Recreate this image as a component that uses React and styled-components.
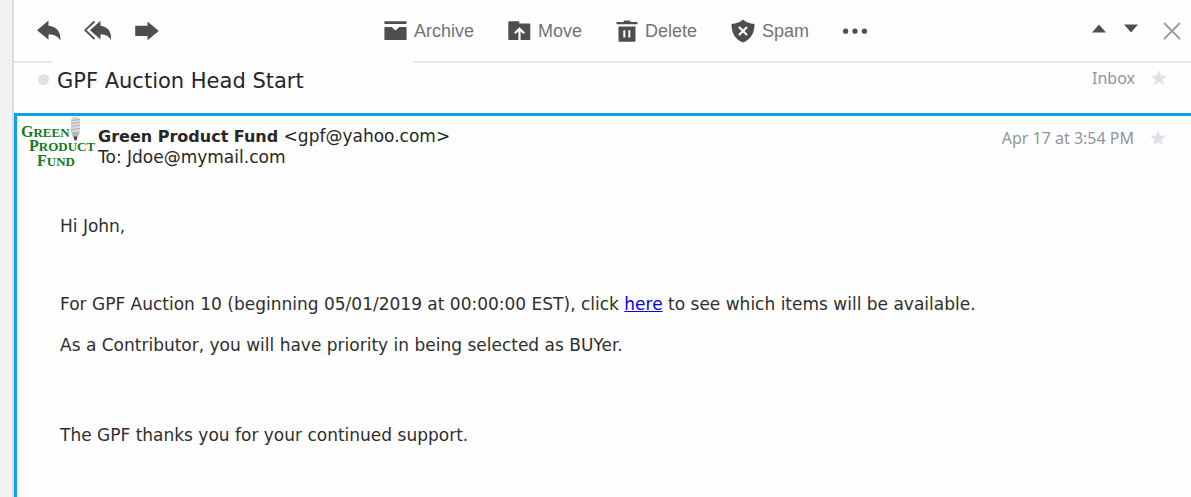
import React from 'react';
import styled, { createGlobalStyle } from 'styled-components';

const GlobalStyle = createGlobalStyle`
  * { box-sizing: border-box; }
  body {
    margin: 0;
    background: #fefefe;
    color: #262626;
    font-family: Verdana, "DejaVu Sans", sans-serif;
    font-size: 17px;
  }
`;

const Page = styled.div`
  display: flex;
  min-height: 100vh;
`;

const Rail = styled.div`
  flex: 0 0 14px;
  background: #f2f2f5;
  border-right: 2px solid #dcdce3;
`;

const Mail = styled.main`
  flex: 1;
  min-width: 0;
  display: flex;
  flex-direction: column;
`;

const Toolbar = styled.header`
  display: flex;
  align-items: center;
  height: 61px;
`;

const ReplyTools = styled.div`
  display: flex;
  align-items: center;
  gap: 23px;
  flex: 0 1 370px;
  padding-left: 23px;
`;

const ActionTools = styled.div`
  display: flex;
  align-items: center;
  gap: 34px;
`;

const ViewTools = styled.div`
  display: flex;
  align-items: center;
  gap: 24px;
  margin-left: auto;
  padding-right: 10px;
`;

const Pager = styled.div`
  display: flex;
  gap: 16px;
`;

const ToolButton = styled.button`
  display: flex;
  align-items: center;
  gap: 7px;
  padding: 0;
  border: 0;
  background: none;
  color: #727276;
  font-family: "Liberation Sans", Arial, sans-serif;
  font-size: 18px;
  line-height: 24px;
  cursor: pointer;

  svg {
    display: block;
    flex: none;
    color: ${(p) => p.$tone || '#4d4e50'};
  }
`;

const RuleRow = styled.div`
  display: flex;
`;

const Rule = styled.div`
  height: 2px;
  background: #e4e8ee;
  flex: ${(p) => (p.$short ? '0 0 38px' : '1')};
  margin-left: ${(p) => (p.$short ? '0' : '361px')};
`;

const SubjectRow = styled.section`
  display: flex;
  align-items: flex-start;
  height: 50px;
  padding: 3px 24px 0 24px;
`;

const UnreadDot = styled.span`
  width: 11px;
  height: 11px;
  margin: 8px 8px 0 0;
  border-radius: 50%;
  background: #dfe2e9;
`;

const Subject = styled.h1`
  margin: 0;
  font-size: 21px;
  line-height: 30px;
  font-weight: 400;
`;

const Meta = styled.div`
  display: flex;
  align-items: center;
  gap: 16px;
  margin-left: auto;
  color: #91959e;
  font-family: "Noto Sans", sans-serif;
  font-size: 16px;
  line-height: 24px;
  white-space: nowrap;
`;

const StarButton = styled.button`
  padding: 0;
  border: 0;
  background: none;
  color: #dfe2ea;
  cursor: pointer;

  svg { display: block; }
`;

const Message = styled.article`
  flex: 1;
  border-top: 3px solid #0aa1ee;
  border-left: 3px solid #0aa1ee;
`;

const MessageHeader = styled.header`
  display: flex;
  align-items: flex-start;
  padding: 0 25px 0 4px;

  ${Meta} { padding-top: 10px; }
`;

const Addresses = styled.div`
  padding: 10px 0 0 1px;
  line-height: 20px;

  strong { font-size: 16px; }
`;

const Body = styled.div`
  padding: 44px 43px 40px;
  color: #2e2e2e;
  line-height: 24px;
`;

const Paragraph = styled.p`
  margin: 0 0 ${(p) => p.$after || '0'};

  a { color: #0000ee; }
`;

const ReplyIcon = () => (
  <svg width="24" height="22" viewBox="0 0 24 22" fill="currentColor">
    <path d="M0 10.200 11.500.6v5.200C19.800 6.500 24 12 23.400 20.800c-2.500-4.500-5.800-6.200-11.900-6.200v5.200z" />
  </svg>
);

const ReplyAllIcon = () => (
  <svg width="28" height="22" viewBox="0 0 28 22">
    <path d="m10.500 1.500-9.300 8.700 9.300 8.800" fill="none" stroke="currentColor" strokeWidth="1.800" />
    <path d="M6 10.200 16.500.8v5C23.700 6.500 28 12 27 20c-2.300-3.900-5-5.400-10.500-5.400v4.800z" fill="currentColor" />
  </svg>
);

const ForwardIcon = () => (
  <svg width="24" height="22" viewBox="0 0 24 22" fill="currentColor">
    <path d="M1 5.700h11.500V1.500L23.800 11l-11.300 9.200V16H1q-.8 0-.8-.8V6.500q0-.8.8-.8z" />
  </svg>
);

const ArchiveIcon = () => (
  <svg width="23" height="22" viewBox="0 0 23 22" fill="currentColor">
    <path d="M1 1.200h21q.6 0 .6.700v1.300q0 .7-.6.700H1q-.6 0-.6-.7V1.900q0-.7.600-.7zM1.200 7h6.500l3.800 3.600L15.300 7h6.500q.8 0 .8.800v11.400q0 .8-.8.800H1.200q-.8 0-.8-.8V7.800q0-.8.800-.8z" />
  </svg>
);

const MoveIcon = () => (
  <svg width="23" height="22" viewBox="0 0 23 22">
    <path d="M1.300 1.300h9.200q.8 0 .8.800v1.400h10q1 0 1 1v14.600q0 1-1 1H1.300q-1 0-1-1V2.300q0-1 1-1z" fill="currentColor" />
    <path d="M11.500 20V9.500M6.800 13.300l4.700-4.500 4.700 4.500" fill="none" stroke="#fff" strokeWidth="2.200" />
  </svg>
);

const TrashIcon = () => (
  <svg width="22" height="24" viewBox="0 0 22 24">
    <path d="M.5 3h6.800l1-1.600h5.400l1 1.600h6.800v2.200H.5zM2.500 7.500h17v14.300q0 1-1 1h-15q-1 0-1-1z" fill="currentColor" />
    <path d="M8.300 11.200v7.300M13.300 11.200v7.300" stroke="#fff" strokeWidth="2" />
  </svg>
);

const SpamIcon = () => (
  <svg width="24" height="24" viewBox="0 0 24 24">
    <path d="M12 .5c2.500 2.600 6.600 4 11.500 4.500.2 8.500-3.300 15.300-11.500 18.500C3.800 20.300.3 13.500.5 5 5.400 4.500 9.500 3.100 12 .5z" fill="currentColor" />
    <path d="m8 8 8 8M16 8l-8 8" stroke="#fff" strokeWidth="2.200" />
  </svg>
);

const DotsIcon = () => (
  <svg width="26" height="22" viewBox="0 0 26 22" fill="currentColor">
    <circle cx="2.600" cy="11.200" r="2.600" />
    <circle cx="12" cy="11.200" r="2.600" />
    <circle cx="21.400" cy="11.200" r="2.600" />
  </svg>
);

const UpIcon = () => (
  <svg width="16" height="22" viewBox="0 0 16 22" fill="currentColor">
    <path d="M8 4.500 15 12.500H1z" />
  </svg>
);

const DownIcon = () => (
  <svg width="16" height="22" viewBox="0 0 16 22" fill="currentColor">
    <path d="M1 4.500h14l-7 8z" />
  </svg>
);

const CloseIcon = () => (
  <svg width="18" height="18" viewBox="0 0 18 18" fill="none" stroke="currentColor" strokeWidth="1.800">
    <path d="m1 1 16 16M17 1 1 17" />
  </svg>
);

const StarIcon = () => (
  <svg width="16" height="16" viewBox="0 0 16 16" fill="currentColor">
    <path d="m8 0 2.200 5.400 5.800.3-4.500 3.800 1.500 5.900-5-3.300-5 3.300 1.500-5.900L0 5.700l5.800-.3z" />
  </svg>
);

const LogoText = styled.text`
  fill: #167a1c;
  font-family: "Liberation Serif", "Times New Roman", serif;
  font-weight: 700;
  font-size: 16px;

  tspan { font-size: 13px; }
`;

const Logo = () => (
  <svg width="76" height="54" viewBox="0 0 76 54" role="img" aria-label="Green Product Fund">
    <LogoText x="0" y="21">G<tspan>REEN</tspan></LogoText>
    <LogoText x="8" y="35">P<tspan>RODUCT</tspan></LogoText>
    <LogoText x="16" y="50">F<tspan>UND</tspan></LogoText>
    <rect x="50" y="1" width="9" height="19" rx="4" fill="#d8d8d8" />
    <path d="M50 4.500l9-1M50 7.500l9-1M50 10.500l9-1M50 13.500l9-1" stroke="#b4b4b4" />
    <path d="M51 16h7l-1 4-1.500 2h-2.500L51.500 20z" fill="#b5b5b5" />
    <path d="M52.500 20.500h4l-1 4h-2z" fill="#444" />
  </svg>
);

const Star = () => (
  <StarButton type="button" aria-label="Star">
    <StarIcon />
  </StarButton>
);

export default function App() {
  return (
    <>
      <GlobalStyle />
      <Page>
        <Rail />
        <Mail>
          <Toolbar>
            <ReplyTools>
              <ToolButton type="button" aria-label="Reply"><ReplyIcon /></ToolButton>
              <ToolButton type="button" aria-label="Reply all"><ReplyAllIcon /></ToolButton>
              <ToolButton type="button" aria-label="Forward"><ForwardIcon /></ToolButton>
            </ReplyTools>
            <ActionTools>
              <ToolButton type="button"><ArchiveIcon />Archive</ToolButton>
              <ToolButton type="button"><MoveIcon />Move</ToolButton>
              <ToolButton type="button"><TrashIcon />Delete</ToolButton>
              <ToolButton type="button"><SpamIcon />Spam</ToolButton>
              <ToolButton type="button" aria-label="More"><DotsIcon /></ToolButton>
            </ActionTools>
            <ViewTools>
              <Pager>
                <ToolButton type="button" aria-label="Previous message"><UpIcon /></ToolButton>
                <ToolButton type="button" aria-label="Next message"><DownIcon /></ToolButton>
              </Pager>
              <ToolButton type="button" aria-label="Close" $tone="#9a9aa6"><CloseIcon /></ToolButton>
            </ViewTools>
          </Toolbar>
          <RuleRow>
            <Rule $short />
            <Rule />
          </RuleRow>
          <SubjectRow>
            <UnreadDot />
            <Subject>GPF Auction Head Start</Subject>
            <Meta>Inbox<Star /></Meta>
          </SubjectRow>
          <Message>
            <MessageHeader>
              <Logo />
              <Addresses>
                <div><strong>Green Product Fund</strong> &lt;gpf@yahoo.com&gt;</div>
                <div>To: Jdoe@mymail.com</div>
              </Addresses>
              <Meta>Apr 17 at 3:54 PM<Star /></Meta>
            </MessageHeader>
            <Body>
              <Paragraph $after="54px">Hi John,</Paragraph>
              <Paragraph $after="17px">
                For GPF Auction 10 (beginning 05/01/2019 at 00:00:00 EST), click <a href="#items">here</a> to see which items will be available.
              </Paragraph>
              <Paragraph $after="66px">As a Contributor, you will have priority in being selected as BUYer.</Paragraph>
              <Paragraph>The GPF thanks you for your continued support.</Paragraph>
            </Body>
          </Message>
        </Mail>
      </Page>
    </>
  );
}
